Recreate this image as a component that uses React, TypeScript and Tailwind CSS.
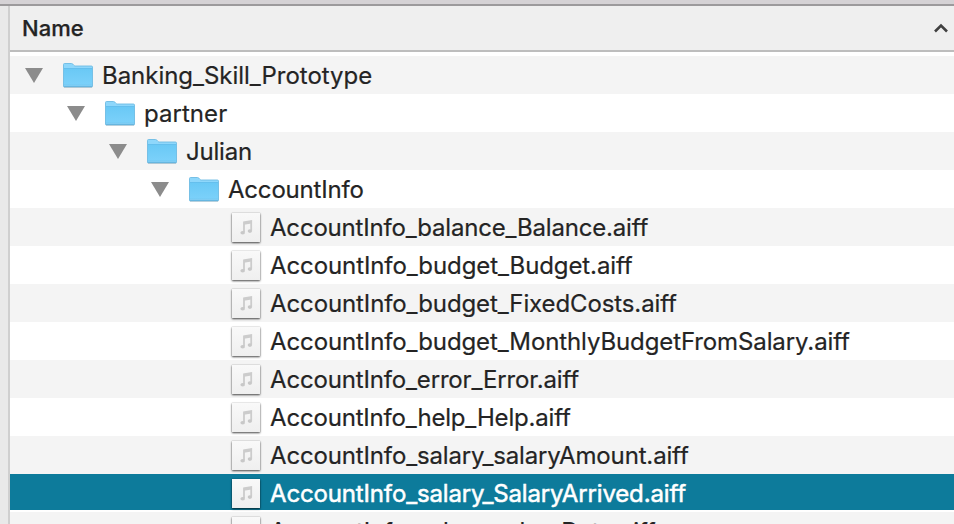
import React from "react";

type Row = { name: string; depth: number; folder?: boolean; tracking: string };

const rows: Row[] = [
  { name: "Banking_Skill_Prototype", depth: 0, folder: true, tracking: "tracking-[-0.03px]" },
  { name: "partner", depth: 1, folder: true, tracking: "tracking-[0.05px]" },
  { name: "Julian", depth: 2, folder: true, tracking: "tracking-[-0.2px]" },
  { name: "AccountInfo", depth: 3, folder: true, tracking: "tracking-[-0.2px]" },
  { name: "AccountInfo_balance_Balance.aiff", depth: 4, tracking: "tracking-[-0.19px]" },
  { name: "AccountInfo_budget_Budget.aiff", depth: 4, tracking: "tracking-[-0.1px]" },
  { name: "AccountInfo_budget_FixedCosts.aiff", depth: 4, tracking: "tracking-[-0.11px]" },
  { name: "AccountInfo_budget_MonthlyBudgetFromSalary.aiff", depth: 4, tracking: "tracking-[-0.11px]" },
  { name: "AccountInfo_error_Error.aiff", depth: 4, tracking: "tracking-[-0.16px]" },
  { name: "AccountInfo_help_Help.aiff", depth: 4, tracking: "tracking-[-0.18px]" },
  { name: "AccountInfo_salary_salaryAmount.aiff", depth: 4, tracking: "tracking-[-0.15px]" },
  { name: "AccountInfo_salary_SalaryArrived.aiff", depth: 4, tracking: "tracking-[-0.15px]" },
  { name: "AccountInfo_salary_salaryDate.aiff", depth: 4, tracking: "tracking-[-0.13px]" },
];

const indents = ["pl-[14px]", "pl-[56px]", "pl-[98px]", "pl-[140px]", "pl-[182px]"];
const SELECTED = 11;

function FolderIcon() {
  return (
    <svg width="32" height="28" viewBox="0 0 32 28" className="shrink-0">
      <defs>
        <linearGradient id="folder" x1="0" y1="0" x2="0" y2="1">
          <stop offset="0" stopColor="#69c8f5" />
          <stop offset="1" stopColor="#7bd1fa" />
        </linearGradient>
      </defs>
      <path d="M2 26.5h28" stroke="#000" strokeOpacity=".14" />
      <path d="M1.5 25V3.5Q1.5 2.5 2.5 2.5h7q.8 0 1.3.6l1.2 1.3q.5.6 1.2.6h16.2q1.1 0 1.1 1.1V25q0 .7-.7.7H2.2q-.7 0-.7-.7Z" fill="#8ed7fb" stroke="#6dbbe3" strokeWidth=".9" />
      <path d="M2 7h28v17H2z" fill="url(#folder)" />
      <path d="M2 7.5h28" stroke="#62bae8" strokeOpacity=".65" />
      <path d="M2 24.2h28" stroke="#62b8e5" strokeOpacity=".7" strokeWidth=".7" />
      <path d="M1.6 25.7h28.8" stroke="#5aaeda" strokeWidth=".8" />
    </svg>
  );
}

function AudioFileIcon() {
  return (
    <span className="ml-[2px] flex h-[29px] w-[28px] shrink-0 items-center justify-center bg-gradient-to-b from-[#f9f9f9] to-[#efefef] shadow-[0_1px_2px_rgba(0,0,0,0.7),0_0_1px_rgba(0,0,0,0.25)]">
      <svg width="15" height="17" viewBox="0 0 15 17">
        <path d="M5 13V3.2L12.2 2V11.5" fill="none" stroke="#cccccc" strokeWidth="1.8" />
        <path d="M5 3 12.5 1.7v2.8L5 5.8Z" fill="#cccccc" />
        <ellipse cx="3.7" cy="13.7" rx="2.3" ry="1.8" fill="#c8c8c8" />
        <ellipse cx="10.9" cy="12.1" rx="2.2" ry="1.8" fill="#c8c8c8" />
      </svg>
    </span>
  );
}

function FileRow({ row, index }: { row: Row; index: number }) {
  const selected = index === SELECTED;
  const background = selected
    ? "border-b-2 border-white bg-[#0d7b9b] text-white [-webkit-text-stroke:0.5px_white]"
    : index % 2
      ? "bg-white [-webkit-text-stroke:0.2px_#242424]"
      : "bg-[#f4f4f4] [-webkit-text-stroke:0.2px_#242424]";
  return (
    <div className={`flex h-[38px] shrink-0 ${indents[row.depth]} ${background}`}>
      <span className="w-[38px] shrink-0 pt-3">
        {row.folder && (
          <svg width="20" height="16" viewBox="0 0 20 16">
            <path d="M1 0h18L10 15Z" fill="#8c8c8c" />
          </svg>
        )}
      </span>
      <span className="flex w-8 shrink-0 pt-[5px]">
        {row.folder ? <FolderIcon /> : <AudioFileIcon />}
      </span>
      <span className={`ml-2 text-[24px] leading-[40px] whitespace-nowrap ${row.tracking}`}>{row.name}</span>
    </div>
  );
}

export default function App() {
  return (
    <div className="flex h-[524px] w-[954px] flex-col overflow-hidden bg-white font-['Inter','Liberation_Sans',sans-serif] text-[#242424]">
      <div className="h-1.5 shrink-0 border-b-2 border-[#9c9a9c] bg-[#d5d2d5]" />
      <div className="flex min-h-0 flex-1">
        <aside className="w-2.5 shrink-0 border-r-2 border-[#cfcfcf] bg-[#e9e9e9]" />
        <main className="flex min-w-0 flex-1 flex-col overflow-hidden">
          <header className="flex h-[46px] shrink-0 items-center justify-between border-b-2 border-[#bdbdbd] bg-[#efefef] pr-[5px] pl-3">
            <span className="text-[22px] leading-[44px] font-medium [-webkit-text-stroke:0.25px_#242424]">Name</span>
            <svg width="16" height="12" viewBox="0 0 16 12">
              <path d="m2 9.5 6-6 6 6" fill="none" stroke="#404040" strokeWidth="2.6" />
            </svg>
          </header>
          <div className="flex flex-col pt-1">
            {rows.map((row, i) => <FileRow key={row.name} row={row} index={i} />)}
          </div>
        </main>
      </div>
    </div>
  );
}
